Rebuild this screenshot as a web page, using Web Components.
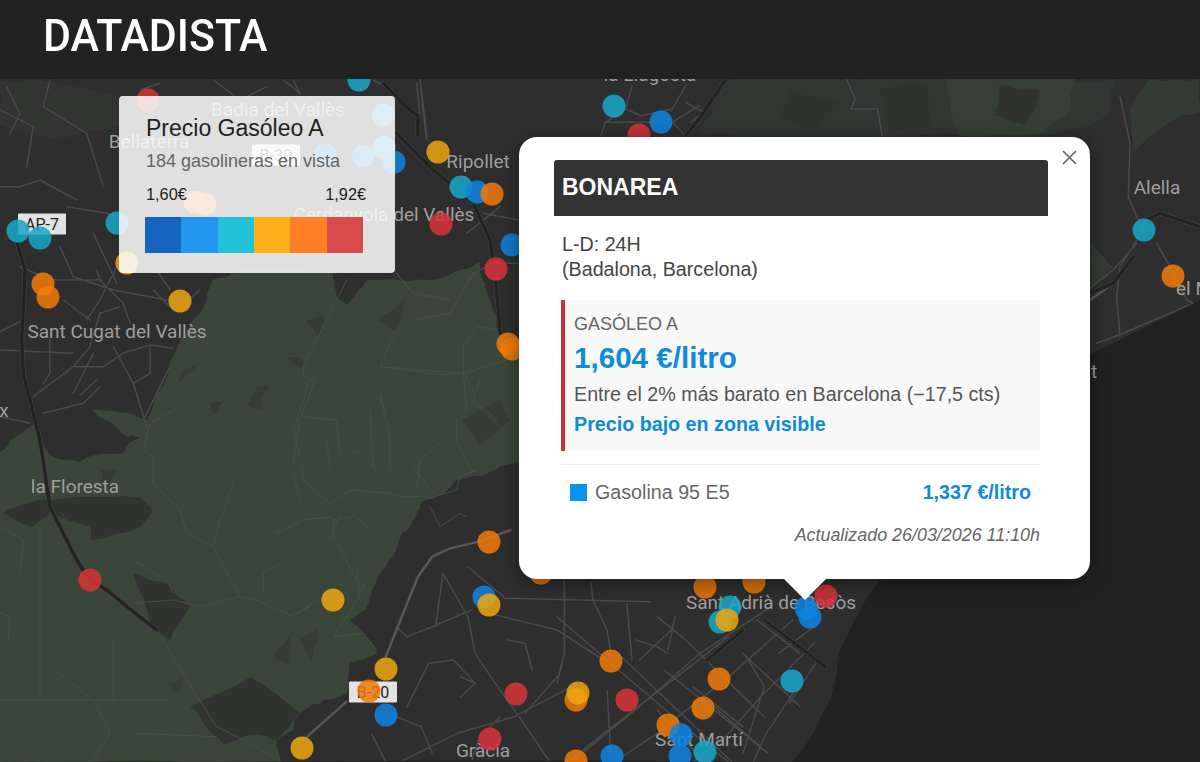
<!DOCTYPE html>
<html lang="es"><head><meta charset="utf-8"><title>Datadista</title>
<style>html,body{margin:0;padding:0;height:100%;overflow:hidden;background:#222;font-family:"Liberation Sans",Arial,sans-serif}</style>
</head><body>
<x-app>
  <x-header slot="header">DATADISTA</x-header>
  <x-map slot="map">
    <x-label x="650" y="74">la Llagosta</x-label>
    <x-label x="278" y="109">Badia del Vallès</x-label>
    <x-label x="149" y="141">Bellaterra</x-label>
    <x-label x="478" y="161">Ripollet</x-label>
    <x-label x="384" y="214">Cerdanyola del Vallès</x-label>
    <x-label x="117" y="331">Sant Cugat del Vallès</x-label>
    <x-label x="4" y="410">x</x-label>
    <x-label x="75" y="486">la Floresta</x-label>
    <x-label x="1157" y="187">Alella</x-label>
    <x-label x="1194" y="288">el M</x-label>
    <x-label x="1094" y="371">t</x-label>
    <x-label x="771" y="602">Sant Adrià de Besòs</x-label>
    <x-label x="483" y="750">Gràcia</x-label>
    <x-label x="699" y="739">Sant Martí</x-label>
    <x-shield x="42" y="224">AP-7</x-shield>
    <x-shield x="276" y="155">B-30</x-shield>
    <x-shield x="373" y="692">B-20</x-shield>

    <x-dot x="359" y="80" c="t"></x-dot><x-dot x="148" y="100" c="r"></x-dot><x-dot x="614" y="106" c="t"></x-dot>
    <x-dot x="661" y="122" c="b"></x-dot><x-dot x="639" y="135" c="r"></x-dot><x-dot x="383" y="115" c="t"></x-dot>
    <x-dot x="384" y="147" c="t"></x-dot><x-dot x="363" y="156" c="b"></x-dot><x-dot x="394" y="162" c="b"></x-dot>
    <x-dot x="325" y="155" c="b"></x-dot><x-dot x="438" y="152" c="y"></x-dot><x-dot x="461" y="187" c="t"></x-dot>
    <x-dot x="477" y="192" c="b"></x-dot><x-dot x="492" y="194" c="o"></x-dot><x-dot x="441" y="224" c="r"></x-dot>
    <x-dot x="512" y="245" c="b"></x-dot><x-dot x="496" y="269" c="r"></x-dot><x-dot x="508" y="344" c="o"></x-dot>
    <x-dot x="512" y="349" c="o"></x-dot><x-dot x="18" y="231" c="t"></x-dot><x-dot x="40" y="238" c="t"></x-dot>
    <x-dot x="117" y="223" c="t"></x-dot><x-dot x="127" y="263" c="y"></x-dot><x-dot x="43" y="284" c="o"></x-dot>
    <x-dot x="48" y="297" c="o"></x-dot><x-dot x="180" y="301" c="y"></x-dot><x-dot x="195" y="202" c="o"></x-dot>
    <x-dot x="205" y="204" c="o"></x-dot><x-dot x="90" y="580" c="r"></x-dot><x-dot x="333" y="600" c="y"></x-dot>
    <x-dot x="386" y="669" c="y"></x-dot><x-dot x="369" y="691" c="o"></x-dot><x-dot x="386" y="715" c="b"></x-dot>
    <x-dot x="302" y="748" c="y"></x-dot><x-dot x="489" y="542" c="o"></x-dot><x-dot x="484" y="597" c="b"></x-dot>
    <x-dot x="489" y="605" c="y"></x-dot><x-dot x="516" y="694" c="r"></x-dot><x-dot x="490" y="739" c="r"></x-dot>
    <x-dot x="541" y="573" c="o"></x-dot><x-dot x="705" y="587" c="o"></x-dot><x-dot x="754" y="582" c="o"></x-dot>
    <x-dot x="826" y="596" c="r"></x-dot><x-dot x="806" y="608" c="b"></x-dot><x-dot x="810" y="617" c="b"></x-dot>
    <x-dot x="730" y="607" c="t"></x-dot><x-dot x="720" y="622" c="t"></x-dot><x-dot x="727" y="620" c="y"></x-dot>
    <x-dot x="611" y="661" c="o"></x-dot><x-dot x="576" y="700" c="o"></x-dot><x-dot x="578" y="693" c="y"></x-dot>
    <x-dot x="627" y="700" c="r"></x-dot><x-dot x="719" y="679" c="o"></x-dot><x-dot x="792" y="681" c="t"></x-dot>
    <x-dot x="703" y="708" c="o"></x-dot><x-dot x="668" y="725" c="o"></x-dot><x-dot x="681" y="735" c="b"></x-dot>
    <x-dot x="576" y="761" c="o"></x-dot><x-dot x="612" y="756" c="b"></x-dot><x-dot x="680" y="756" c="b"></x-dot>
    <x-dot x="705" y="752" c="t"></x-dot><x-dot x="1144" y="230" c="t"></x-dot><x-dot x="1173" y="276" c="o"></x-dot>

    <x-legend heading="Precio Gasóleo A" sub="184 gasolineras en vista" min="1,60€" max="1,92€"></x-legend>
    <x-popup>
      <x-station-head>BONAREA</x-station-head>
      <x-address><div>L-D: 24H</div><div>(Badalona, Barcelona)</div></x-address>
      <x-price-card fuel="GASÓLEO A" price="1,604 €/litro" note="Entre el 2% más barato en Barcelona (−17,5 cts)" flag="Precio bajo en zona visible"></x-price-card>
      <x-fuel-row name="Gasolina 95 E5" price="1,337 €/litro"></x-fuel-row>
      <x-updated>Actualizado 26/03/2026 11:10h</x-updated>
    </x-popup>
  </x-map>
</x-app>
<script>
function def(name, css, html, extra){
  const tpl=document.createElement('template');
  tpl.innerHTML='<style>'+css+'</style>'+html;
  customElements.define(name, class extends HTMLElement{
    constructor(){super();this.attachShadow({mode:'open'}).appendChild(tpl.content.cloneNode(true));}
    connectedCallback(){ if(extra) extra(this,this.shadowRoot); }
  });
}
def('x-app',':host{display:flex;flex-direction:column;width:1200px;height:762px;overflow:hidden}','<slot name="header"></slot><slot name="map"></slot>');
def('x-header',':host{display:flex;align-items:center;height:79px;flex:none;background:#222;box-sizing:border-box;padding:0 0 8px 43px;color:#fff;font:500 45px/1 Roboto,sans-serif;position:relative;z-index:5}span{display:inline-block;transform:scaleX(.952);transform-origin:left center}','<span><slot></slot></span>');

function Z(ox,oy,kx,ky,s){
  return s.trim().split(/\s*;\s*/).filter(Boolean).map(line=>{
    const n=line.trim().split(/[\s,]+/).map(Number);let p='';
    for(let i=0;i<n.length;i+=2)p+=(i?'L':'M')+(ox+n[i]/kx).toFixed(1)+' '+(oy+n[i+1]/ky).toFixed(1);
    return p;}).join('');
}
let seed=29;const rnd=()=>{seed=(seed*16807)%2147483647;return seed/2147483647;};
function rough(pts,amp,depth){
  let a=pts;
  for(let d=0;d<depth;d++){
    const b=[];
    for(let i=0;i<a.length;i++){
      const p=a[i],q=a[(i+1)%a.length];b.push(p);
      const len=Math.hypot(q[0]-p[0],q[1]-p[1]);
      const m=Math.min(amp,len*.22);
      b.push([(p[0]+q[0])/2+(rnd()-.5)*m,(p[1]+q[1])/2+(rnd()-.5)*m]);
    }
    a=b;amp*=.6;
  }
  return 'M'+a.map(p=>p[0].toFixed(1)+' '+p[1].toFixed(1)).join('L')+'Z';
}
const green=rough([[0,452],[23,433],[35,422],[50,455],[80,462],[123,453],[140,437],[127,437],[93,410],[147,420],[170,367],[177,347],[200,313],[213,280],[240,268],[333,270],[337,297],[347,305],[367,280],[450,275],[480,262],[487,293],[497,330],[530,380],[530,480],[517,463],[457,480],[423,500],[410,527],[397,547],[380,573],[367,607],[350,620],[377,653],[350,663],[347,693],[300,713],[293,730],[277,740],[282,762],[0,762]],9,3);
const darkP=[
 [[3,513],[30,503],[50,500],[107,497],[140,497],[153,510],[133,530],[107,537],[90,540],[90,527],[50,513],[33,527],[10,517]],
 [[133,573],[167,583],[190,607],[170,640],[150,623]],
 [[190,707],[250,677],[300,713],[277,740],[250,735],[225,745],[205,725]],
 [[333,273],[367,280],[347,305],[337,297]]
].map(p=>rough(p,4,2)).join('');
const softP=[
 [[273,657],[293,630],[290,663]],[[167,683],[183,677],[178,693]],
 [[306,320],[325,318],[318,336]],[[285,358],[305,360],[302,368]],[[260,385],[262,410],[248,405]],
 [[378,320],[405,300],[400,322],[395,330]],[[462,420],[500,400],[510,420],[480,445]],[[435,500],[465,480],[460,505]],
 [[185,370],[197,365],[178,385]],[[255,388],[268,385],[260,400]],[[100,470],[118,470],[108,490]],
 [[300,640],[318,630],[312,660]],[[210,405],[225,400],[215,415]],[[348,150],[348,150],[348,150]]
].map(p=>rough(p,4,2)).join('');
const greenTop=rough([[725,79],[850,79],[945,79],[1115,79],[1110,110],[1080,128],[1010,136],[880,136],[740,136],[700,136],[715,100]],9,3);
const greenTop2=rough([[945,79],[1075,79],[1070,110],[1045,132],[960,136]],8,3);
const darkTop=[[[790,90],[840,100],[815,130],[780,120]],[[880,90],[925,85],[930,125],[890,130]],[[1000,85],[1040,90],[1025,125],[995,115]]].map(p=>rough(p,7,2)).join('');
const greenR=rough([[1090,240],[1113,267],[1090,287]],3,2)+rough([[1133,153],[1173,120],[1200,113],[1200,79],[1150,79],[1130,110]],5,2);
const greenL=rough([[0,82],[55,82],[120,96],[119,125],[60,140],[0,125]],8,2);
const coast=rough([[1200,79],[1200,300],[1090,354],[1000,440],[900,560],[880,580],[853,623],[840,650],[831,697],[815,730],[792,762],[0,762],[0,79]],3,2);

const streets=
 Z(0,260,3,3,`160,60 300,60 370,130 390,190;300,60 290,30;190,120 270,180;0,215 70,180;0,270 220,280;100,410 220,320 310,320 370,280 450,255 520,265;220,320 270,260 300,160 360,140;340,260 400,370 440,500;400,370 450,340 450,260;430,480 510,320;240,405 290,360;220,400 280,280;130,460 250,430 300,380;0,470 90,490;150,240 150,340 130,370;460,90 510,140;600,90 540,140;450,0 510,90`)+
 Z(0,0,3,3,`200,620 320,640 350,650;60,800 130,830;180,740 220,830 340,870 500,900;280,700 350,850;350,800 300,900 260,960;20,260 60,340 30,400;0,330 100,380 80,500;150,240 130,320 260,400 310,560;230,600 120,540 60,560 0,560;640,240 720,300 800,260;480,250 420,270;850,240 900,280 880,240;1250,250 1260,350;1260,240 1270,340 1280,420;1180,290 1260,350;1420,820 1480,790 1555,790;1400,700 1500,620;1450,640 1555,660;1240,960 1350,940 1420,820;1190,820 1240,880 1350,900;1180,270 1120,240`)+
 Z(400,79,2.24,3,`45,0 60,170;520,20 505,90 540,110 610,90 640,20;460,130 610,130 670,80;610,130 640,170;505,90 460,130 450,170;640,70 680,100 650,130`)+
 Z(300,520,2.8,3,`400,160 470,290 490,400 560,510;270,320 300,350 370,320 480,270;530,280 720,330;720,330 850,420;570,235 980,245;740,180 740,400 720,490;815,190 820,240 860,330 870,400;915,250 930,420;720,290 870,430 1100,640 1200,726;470,140 570,230;1000,290 1080,360 1300,590;1320,260 1120,400 950,560 760,726;1380,300 1200,470 1000,640 880,726;1440,370 1290,530 1200,640 1100,726;1200,350 1020,500 850,640 750,726;1020,450 1310,700;900,410 1210,726;1240,400 1400,560;580,360 630,370 650,450;940,360 1000,380 1030,400;450,470 490,490;300,560 360,430 430,420 490,490 450,530;200,640 240,726;270,590 340,620 370,700;280,726 440,640 600,590 760,500;1300,500 1240,700;1380,520 1300,650 1270,726;400,160 380,320;560,510 620,600 700,726;630,580 720,470;480,726 500,660 560,590;860,510 870,700;1100,500 1240,620;1250,410 1300,500;1160,560 1290,680;1000,570 1130,726;1050,290 1030,390;1280,300 1400,400;1340,400 1440,320;1450,420 1370,550;1040,330 950,420`)+
 Z(1000,80,3,3,`360,50 390,190 385,350 410,410 430,450;430,450 360,560 350,650 360,770;410,490 340,570 270,625;470,490 510,560 560,660 600,680;290,790 370,760 580,670`)+
 Z(400,79,2.24,3,`1000,0 1020,60 1010,90 1070,90 1080,170`);
const forest=
 Z(240,260,3,3,`320,60 290,120 190,320 190,350 225,360 180,480 160,610;190,470 290,480 300,590;185,600 190,660 270,730 330,690 450,700 480,710 550,710;260,540 270,630;390,450 400,620;420,400 450,510 450,630;320,600 350,570 410,630;460,230 420,320 610,345 670,340 800,300;670,260 670,340 700,390 700,430 770,490;720,360 700,420 770,480;650,480 650,540 690,630 710,635;600,550 540,600 530,690;670,260 710,200 770,210;100,820 180,790;300,760 270,840;340,760 390,810;550,720 650,690 660,650 710,630;570,740 600,800 660,760 680,770`)+
 Z(0,340,3,3,`540,200 450,250 430,330 460,350 460,430 540,510 560,580 640,620 720,770 770,780 880,830 950,780 1000,760;640,620 650,570 700,430;720,770 600,800 520,780 400,790;900,350 880,270 930,120;1140,170 1170,300;880,400 900,480;1140,80 1390,100 1400,210;1060,530 1000,540 1000,590 1070,720;790,620 840,580 900,540 1000,530;120,560 120,1080;0,1080 500,1080;150,980 280,1080 330,1180;1000,890 1090,880 1130,930;340,900 340,1080;790,760 790,700 840,670;470,870 560,1020 650,1160 770,1220 840,1266;0,560 70,600;400,660 500,720 520,760;930,800 860,830;1000,890 1060,800 1100,720;0,820 30,830 25,900;70,600 60,700;280,1260 330,1180;400,1180 650,1190;1080,780 1070,680;1240,380 1300,460`);
const mains=
 Z(300,520,2.8,3,`20,650 130,545;240,410 330,170 370,110 420,85 500,65 590,30`)+
 Z(1000,80,3,3,`270,660 340,610`);
const hwCore=
 Z(0,340,3,3,`65,0 70,100 120,300 150,500 230,660 270,720 320,750 400,815 470,870`)+
 Z(0,210,3,3,`40,60 75,180 70,300 65,390`)+
 Z(0,0,3,3,`1150,250 1240,340;1190,400 1300,510 1420,610 1470,720 1490,870 1500,1000`)+
 Z(300,520,2.8,3,`1300,300 1470,440;1240,330 1140,420`)+
 Z(400,79,2.24,3,`730,0 670,120 640,170;0,70 40,110 40,170`)+
 Z(1000,80,3,3,`270,640 340,610 400,530;440,420 480,400 600,440`);

def('x-map',':host{display:block;position:relative;flex:1;overflow:hidden;background:#212121}svg{position:absolute;left:0;top:0;width:1200px;height:683px;display:block;filter:blur(.5px)}',
`<svg viewBox="0 79 1200 683" aria-hidden="true">
 <defs><clipPath id="land"><path d="${coast}"/></clipPath><clipPath id="g"><path d="${green}"/></clipPath></defs>
 <rect x="0" y="79" width="1200" height="683" fill="#212121"/>
 <g clip-path="url(#land)">
  <rect x="0" y="79" width="1200" height="683" fill="#2e2e2e"/>
  <path d="${greenL}" fill="#313431"/>
  <path d="${greenTop}" fill="#323632"/><path d="${greenTop2}" fill="#363f36"/><path d="${darkTop}" fill="#303230"/><path d="${greenR}" fill="#343b34"/>
  <path d="${green}" fill="#3a463a"/>
  <path d="${darkP}" fill="#303330" clip-path="url(#g)"/>
  <path d="${softP}" fill="#343c34" clip-path="url(#g)"/>
  <g fill="none" stroke-linejoin="round" stroke-linecap="round">
   <path d="${streets}" stroke="#4a4a4a" stroke-width="1.5"/>
   <path d="${forest}" stroke="#465146" stroke-width="1"/>
   <path d="${mains}" stroke="#585858" stroke-width="2.4"/>
   <path d="${hwCore}" stroke="#434343" stroke-width="4.6"/>
   <path d="${hwCore}" stroke="#232323" stroke-width="3.4"/>
  </g>
 </g>
</svg><slot></slot>`);

const place=(el)=>{el.style.left=el.getAttribute('x')+'px';el.style.top=(el.getAttribute('y')-79)+'px';};
def('x-label',':host{position:absolute;transform:translate(-50%,-50%);font:400 19px/1 Roboto,sans-serif;color:#9e9e9e;white-space:nowrap}','<slot></slot>',place);
def('x-shield',':host{position:absolute;transform:translate(-50%,-50%);width:48px;height:21px;display:flex;align-items:center;justify-content:center;background:#e2e2e2;border-radius:1px;font:400 16px/1 Roboto,sans-serif;color:#222}','<slot></slot>',place);
const DOT={t:'#18a8c8',b:'#0f84e0',o:'#f07a08',y:'#eda512',r:'#d6343a'};
def('x-dot',':host{position:absolute;width:23px;height:23px;border-radius:50%;opacity:.86;transform:translate(-50%,-50%)}','',
 (el)=>{place(el);el.style.background=DOT[el.getAttribute('c')];});

def('x-legend',`:host{position:absolute;left:119px;top:17px;width:276px;height:177px;box-sizing:border-box;padding:19px 32px 20px 26px;background:rgba(255,255,255,.85);border-radius:4px;color:#222}
.t{font-size:23px;line-height:26px;margin-left:1px;color:#222}
.s{font-size:18px;line-height:22px;margin:9px 0 0 1px;color:#666}
.v{display:flex;justify-content:space-between;width:220px;margin:12px 0 0 1px;font-size:16.3px;line-height:20px;color:#222}
.bar{display:grid;grid-template-columns:repeat(6,1fr);height:36px;margin-top:13px}
.bar i:nth-child(1){background:#1565c0}.bar i:nth-child(2){background:#2196ee}.bar i:nth-child(3){background:#24c2d8}.bar i:nth-child(4){background:#ffb01a}.bar i:nth-child(5){background:#ff7f27}.bar i:nth-child(6){background:#d84a4e}`,
`<div class="t"></div><div class="s"></div><div class="v"><span class="a"></span><span class="b"></span></div><div class="bar"><i></i><i></i><i></i><i></i><i></i><i></i></div>`,
 (el,r)=>{r.querySelector('.t').textContent=el.getAttribute('heading');r.querySelector('.s').textContent=el.getAttribute('sub');r.querySelector('.a').textContent=el.getAttribute('min');r.querySelector('.b').textContent=el.getAttribute('max');});

def('x-popup',`:host{position:absolute;left:519px;top:58px;width:571px;box-sizing:border-box;padding:23px 42px 33px 35px;background:#fff;border-radius:18px;box-shadow:0 4px 18px rgba(0,0,0,.4);color:#444;font-size:19.7px}
.tip{position:absolute;left:264px;bottom:-21px;width:0;height:0;border:22px solid transparent;border-top:22px solid #fff;border-bottom:0}
.x{position:absolute;right:12px;top:12px;width:17px;height:17px;display:block}`,
`<slot></slot><span class="tip"></span><svg class="x" viewBox="0 0 17 17" aria-label="Cerrar"><path d="M2 2L15 15M15 2L2 15" stroke="#666" stroke-width="1.7" fill="none"/></svg>`);
def('x-station-head',':host{display:flex;align-items:center;height:56px;box-sizing:border-box;padding:0 8px 2px;background:#333;border-radius:3px 3px 0 0;color:#fff;font-weight:700;font-size:23px}','<slot></slot>');
def('x-address',':host{display:block;margin:16px 0 18px 8px;line-height:25px;color:#444}','<slot></slot>');
def('x-price-card',`:host{display:block;margin:0 8px 0 7px;height:151px;box-sizing:border-box;padding:13px 0 14px 9px;background:#f8f8f8;border-left:4px solid #c8303c}
.f{font-size:18px;line-height:22px;color:#666}.p{font-size:29.6px;line-height:36px;font-weight:700;color:#0e8bdc;margin-top:5px}
.n{line-height:24px;margin-top:6px;color:#555;white-space:nowrap}.g{line-height:24px;margin-top:6px;font-weight:700;color:#0e8bd6;white-space:nowrap}`,
`<div class="f"></div><div class="p"></div><div class="n"></div><div class="g"></div>`,
 (el,r)=>{for(const [c,a] of [['.f','fuel'],['.p','price'],['.n','note'],['.g','flag']])r.querySelector(c).textContent=el.getAttribute(a);});
def('x-fuel-row',`:host{display:flex;align-items:center;margin:13px 8px 0 7px;padding:15px 9px 0 9px;border-top:1px solid #eee;line-height:25px;color:#666}
i{width:17px;height:17px;background:#0a93ea;margin-right:8px;flex:none}.n{flex:1}.p{font-weight:700;color:#0e8bdc}`,
`<i></i><span class="n"></span><span class="p"></span>`,
 (el,r)=>{r.querySelector('.n').textContent=el.getAttribute('name');r.querySelector('.p').textContent=el.getAttribute('price');});
def('x-updated',':host{display:block;margin:19px 8px 0 0;text-align:right;font-style:italic;font-size:17.9px;line-height:22px;color:#666}','<slot></slot>');
</script>
</body></html>
